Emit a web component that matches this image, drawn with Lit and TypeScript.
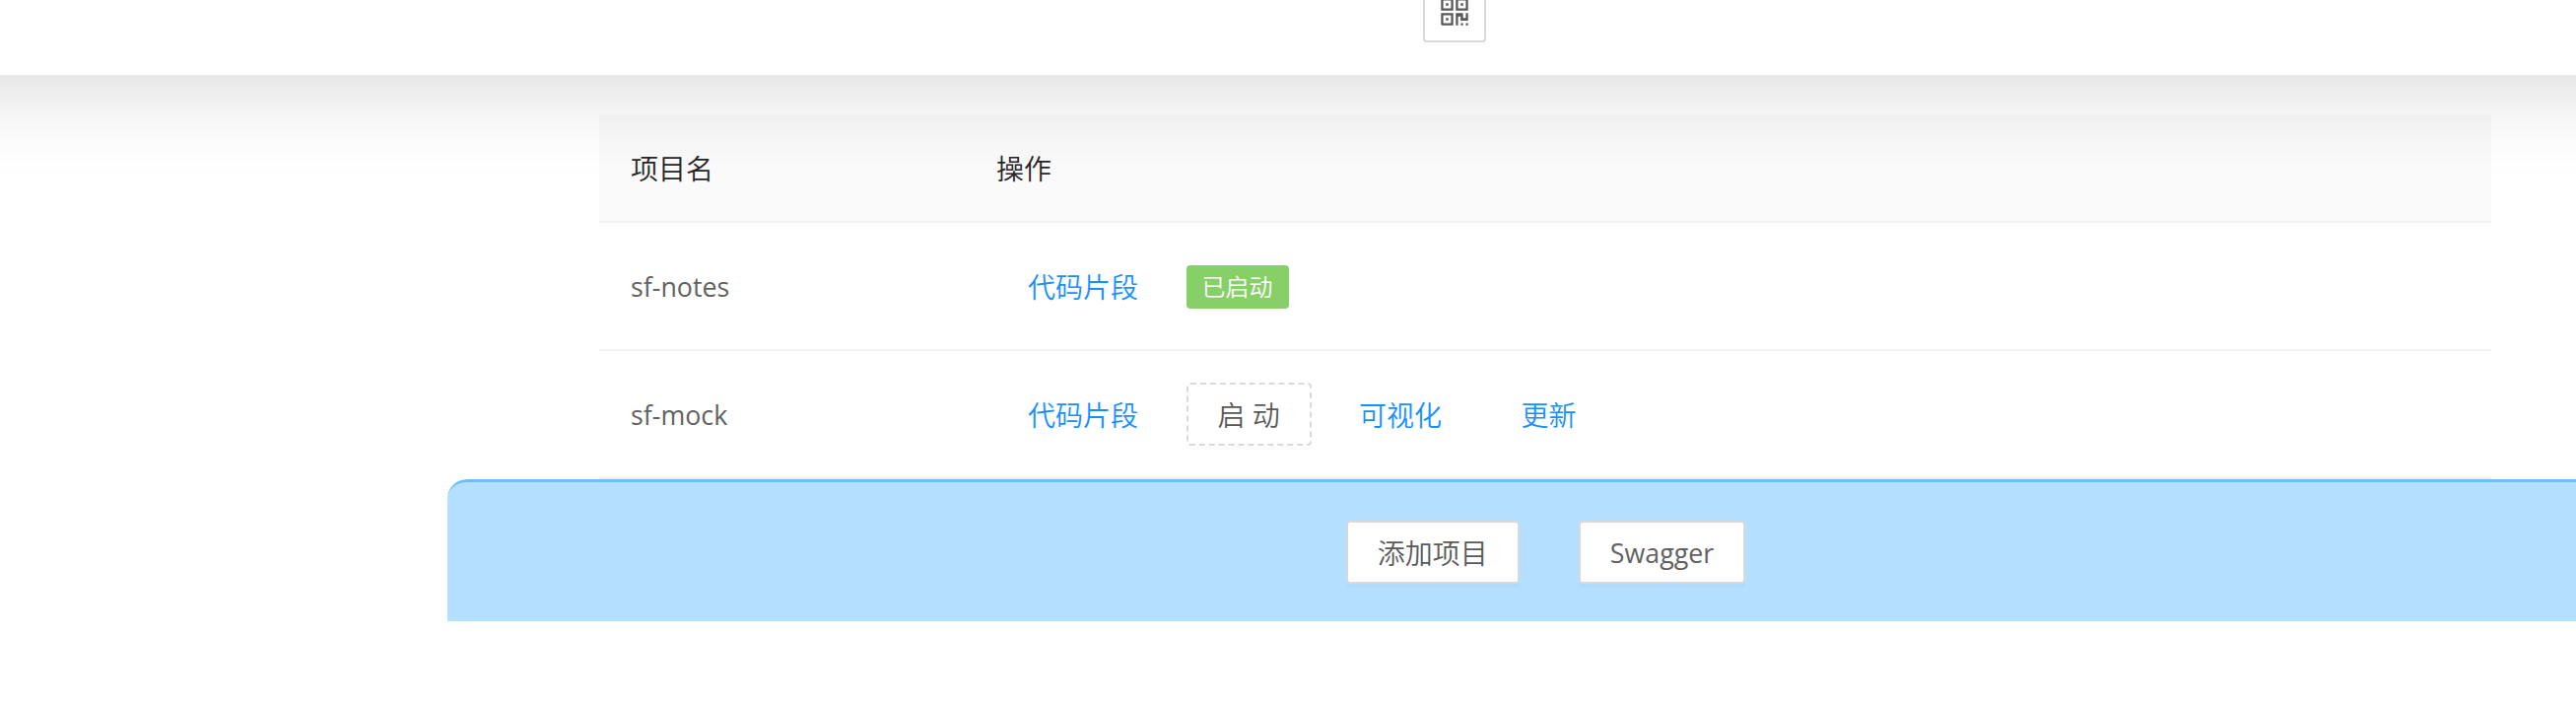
import { LitElement, html, css } from "lit";
import { customElement } from "lit/decorators.js";

interface Project {
  name: string;
  started: boolean;
}

const projects: Project[] = [
  { name: "sf-notes", started: true },
  { name: "sf-mock", started: false },
];

@customElement("app-root")
export class AppRoot extends LitElement {
  static styles = css`
    :host {
      display: flow-root;
      height: 718px;
      overflow: hidden;
      background: #fff;
      color: #595959;
      font: 350 28px/44px "Open Sans", "Noto Sans CJK SC", sans-serif;
    }
    * {
      box-sizing: border-box;
    }
    .top {
      display: flex;
      align-items: flex-end;
      position: relative;
      z-index: 1;
      height: 196px;
      margin: -120px -160px 0;
      padding: 0 0 33px 1604px;
      background: #fff;
      box-shadow: 0 0 104px rgba(0, 0, 0, 0.19);
    }
    .btn {
      display: flex;
      align-items: center;
      justify-content: center;
      height: 64px;
      padding: 2px 30px 0;
      border: 2px solid #d9d9d9;
      border-radius: 4px;
      background: #fff;
      box-shadow: 0 4px 0 rgba(0, 0, 0, 0.016);
      font: inherit;
      color: inherit;
      white-space: pre;
    }
    .icon {
      width: 64px;
      padding: 2px 0 0;
    }
    .icon svg {
      width: 32px;
      height: 32px;
      fill: #595959;
    }
    .dashed {
      border-style: dashed;
      width: 127px;
      padding: 2px 0 0;
    }
    .link {
      color: #1890ff;
      background: none;
      border-color: transparent;
      box-shadow: none;
    }
    .table {
      margin: 40px 86px 0 608px;
    }
    .row {
      display: grid;
      grid-template-columns: 371px 1fr;
      align-items: center;
      height: 130px;
      padding: 0 32px;
      border-bottom: 2px solid #f0f0f0;
    }
    .row > span {
      padding-top: 2px;
    }
    .head {
      height: 110px;
      background: #fafafa;
      color: #262626;
      border-radius: 4px 4px 0 0;
    }
    .latin {
      font-size: 26.8px;
      font-weight: 400;
      color: #626262;
    }
    .actions {
      display: flex;
      align-items: center;
      gap: 16.5px;
    }
    .tag {
      height: 44px;
      margin-top: 2px;
      padding: 0 16px;
      border-radius: 4px;
      background: #87d068;
      color: #fff;
      font-size: 24px;
    }
    .foot {
      display: flex;
      justify-content: center;
      gap: 60px;
      height: 144px;
      margin-left: 454px;
      padding: 39px 0 0 69px;
      border-top: 3px solid #69bfff;
      border-top-left-radius: 20px;
      background: #b4dfff;
    }
  `;

  private row(p: Project) {
    return html`<div class="row">
      <span class="latin">${p.name}</span>
      <div class="actions">
        <button class="btn link">代码片段</button>
        ${p.started
          ? html`<span class="tag">已启动</span>`
          : html`<button class="btn dashed">启 动</button>
              <button class="btn link">可视化</button>
              <button class="btn link">更新</button>`}
      </div>
    </div>`;
  }

  render() {
    return html`
      <header class="top">
        <button class="btn icon" aria-label="QR">
          <svg viewBox="64 64 896 896">
            <path
              d="M468 128H160c-17.700 0-32 14.300-32 32v308c0 4.400 3.600 8 8 8h332c4.400 0 8-3.600 8-8V136c0-4.400-3.600-8-8-8zm-56 284H192V192h220v220zm-138-74h56c4.400 0 8-3.600 8-8v-56c0-4.400-3.600-8-8-8h-56c-4.400 0-8 3.600-8 8v56c0 4.400 3.600 8 8 8zm194 210H136c-4.400 0-8 3.600-8 8v308c0 17.700 14.300 32 32 32h308c4.400 0 8-3.600 8-8V556c0-4.400-3.600-8-8-8zm-56 284H192V612h220v220zm-138-74h56c4.400 0 8-3.600 8-8v-56c0-4.400-3.600-8-8-8h-56c-4.400 0-8 3.600-8 8v56c0 4.400 3.600 8 8 8zm590-630H556c-4.400 0-8 3.600-8 8v332c0 4.400 3.600 8 8 8h332c4.400 0 8-3.600 8-8V160c0-17.700-14.300-32-32-32zm-32 284H612V192h220v220zm-138-74h56c4.400 0 8-3.600 8-8v-56c0-4.400-3.600-8-8-8h-56c-4.400 0-8 3.600-8 8v56c0 4.400 3.600 8 8 8zm194 210h-48c-4.400 0-8 3.600-8 8v134h-78V556c0-4.400-3.600-8-8-8H556c-4.400 0-8 3.600-8 8v332c0 4.400 3.600 8 8 8h48c4.400 0 8-3.600 8-8V644h72v110c0 4.400 3.600 8 8 8h196c4.400 0 8-3.600 8-8V556c0-4.400-3.600-8-8-8zM746 832h-48c-4.400 0-8 3.600-8 8v48c0 4.400 3.600 8 8 8h48c4.400 0 8-3.600 8-8v-48c0-4.400-3.600-8-8-8zm142 0h-48c-4.400 0-8 3.600-8 8v48c0 4.400 3.600 8 8 8h48c4.400 0 8-3.600 8-8v-48c0-4.400-3.600-8-8-8z"
            />
          </svg>
        </button>
      </header>
      <main class="table">
        <div class="row head"><span>项目名</span><span>操作</span></div>
        ${projects.map((p) => this.row(p))}
      </main>
      <footer class="foot">
        <button class="btn">添加项目</button>
        <button class="btn latin">Swagger</button>
      </footer>
    `;
  }
}
